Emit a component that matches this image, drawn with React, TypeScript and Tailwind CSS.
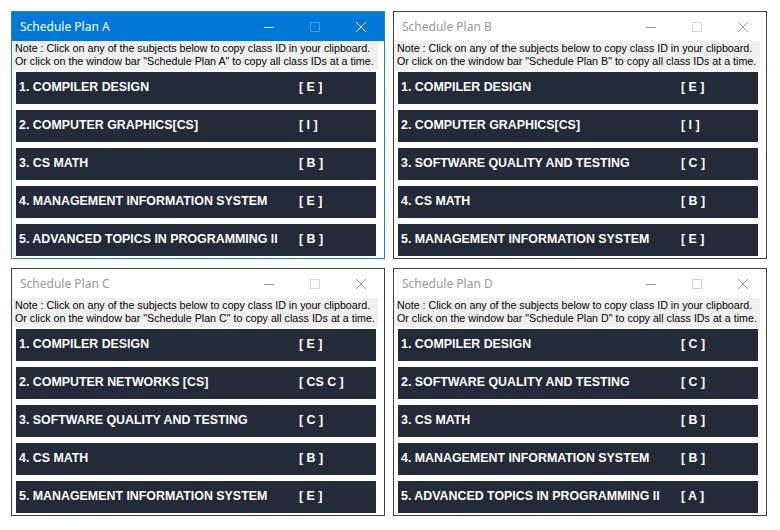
import React from 'react'

type Subject = { name: string; code: string }
type Plan = { title: string; active?: boolean; subjects: Subject[] }

const PLANS: Plan[] = [
  {
    title: 'Schedule Plan A',
    active: true,
    subjects: [
      { name: 'COMPILER DESIGN', code: '[ E ]' },
      { name: 'COMPUTER GRAPHICS[CS]', code: '[ I ]' },
      { name: 'CS MATH', code: '[ B ]' },
      { name: 'MANAGEMENT INFORMATION SYSTEM', code: '[ E ]' },
      { name: 'ADVANCED TOPICS IN PROGRAMMING II', code: '[ B ]' },
    ],
  },
  {
    title: 'Schedule Plan B',
    subjects: [
      { name: 'COMPILER DESIGN', code: '[ E ]' },
      { name: 'COMPUTER GRAPHICS[CS]', code: '[ I ]' },
      { name: 'SOFTWARE QUALITY AND TESTING', code: '[ C ]' },
      { name: 'CS MATH', code: '[ B ]' },
      { name: 'MANAGEMENT INFORMATION SYSTEM', code: '[ E ]' },
    ],
  },
  {
    title: 'Schedule Plan C',
    subjects: [
      { name: 'COMPILER DESIGN', code: '[ E ]' },
      { name: 'COMPUTER NETWORKS [CS]', code: '[ CS C ]' },
      { name: 'SOFTWARE QUALITY AND TESTING', code: '[ C ]' },
      { name: 'CS MATH', code: '[ B ]' },
      { name: 'MANAGEMENT INFORMATION SYSTEM', code: '[ E ]' },
    ],
  },
  {
    title: 'Schedule Plan D',
    subjects: [
      { name: 'COMPILER DESIGN', code: '[ C ]' },
      { name: 'SOFTWARE QUALITY AND TESTING', code: '[ C ]' },
      { name: 'CS MATH', code: '[ B ]' },
      { name: 'MANAGEMENT INFORMATION SYSTEM', code: '[ B ]' },
      { name: 'ADVANCED TOPICS IN PROGRAMMING II', code: '[ A ]' },
    ],
  },
]

function CaptionButtons({ active }: { active?: boolean }) {
  const main = active ? '#ffffff' : '#9a9a9a'
  const faded = active ? '#4d9be3' : '#d6d6d6'
  return (
    <div className="flex h-full">
      <div className="w-[46px] flex items-center justify-center">
        <svg width="10" height="10" viewBox="0 0 10 10">
          <line x1="0" y1="5.5" x2="10" y2="5.5" stroke={main} strokeWidth="1" />
        </svg>
      </div>
      <div className="w-[46px] flex items-center justify-center">
        <svg width="10" height="10" viewBox="0 0 10 10">
          <rect x="0.5" y="0.5" width="9" height="9" fill="none" stroke={faded} strokeWidth="1" />
        </svg>
      </div>
      <div className="w-[46px] flex items-center justify-center">
        <svg width="10" height="10" viewBox="0 0 10 10">
          <path d="M0 0 L10 10 M10 0 L0 10" stroke={main} strokeWidth="1" />
        </svg>
      </div>
    </div>
  )
}

function PlanWindow({ plan }: { plan: Plan }) {
  return (
    <div
      className={`flex flex-col h-[248px] bg-white border ${
        plan.active ? 'border-[#1883d7]' : 'border-[#3f3f3f]'
      }`}
    >
      {/* Title bar */}
      <div
        className={`h-[29px] shrink-0 flex items-center justify-between ${
          plan.active ? 'bg-[#0078d7] text-white' : 'bg-white text-[#999999]'
        }`}
      >
        <span className="pl-[8px] text-[12px] font-['Segoe_UI','Noto_Sans',sans-serif]">{plan.title}</span>
        <CaptionButtons active={plan.active} />
      </div>

      {/* Note */}
      <div className="h-[29px] shrink-0 mr-[6px] bg-[#f0f0f0] pl-[3px] pt-[1px] text-[10.7px] leading-[13px] text-black font-['Liberation_Sans',Arial,sans-serif] whitespace-nowrap">
        <div>Note : Click on any of the subjects below to copy class ID in your clipboard.</div>
        <div>Or click on the window bar "{plan.title}" to copy all class IDs at a time.</div>
      </div>

      {/* Subjects */}
      <div className="flex flex-col gap-[6px] mt-[2px] ml-[4px] w-[360px]">
        {plan.subjects.map((s, i) => (
          <div
            key={i}
            className="h-[32px] flex items-center pl-[3px] pb-[1px] bg-[#232a38] text-white font-bold text-[12.4px] font-['Liberation_Sans',Arial,sans-serif] whitespace-nowrap"
          >
            <span className="w-[280px]">
              {i + 1}. {s.name}
            </span>
            <span>{s.code}</span>
          </div>
        ))}
      </div>
    </div>
  )
}

export default function App() {
  return (
    <div className="w-[780px] h-[530px] bg-white pt-[11px] pl-[11px]">
      <div className="grid grid-cols-[374px_374px] gap-x-[8px] gap-y-[9px]">
        {PLANS.map((p) => (
          <PlanWindow key={p.title} plan={p} />
        ))}
      </div>
    </div>
  )
}
